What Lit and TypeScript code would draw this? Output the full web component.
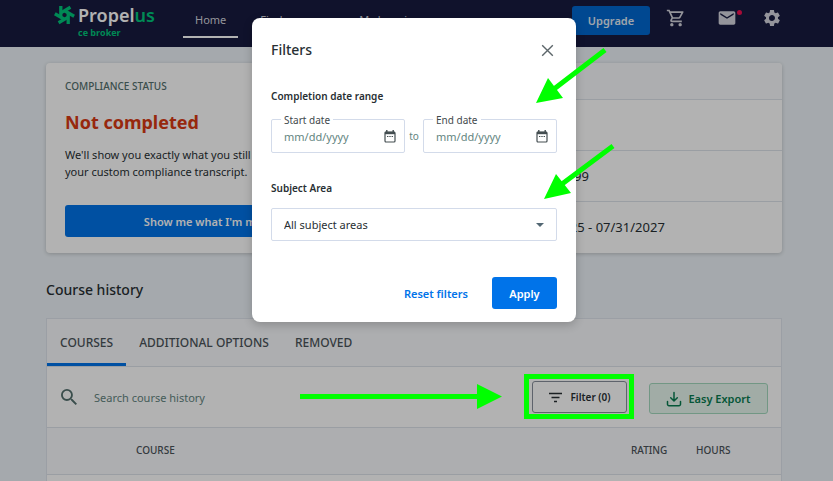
import { LitElement, html, css, svg } from "lit";
import { customElement, state } from "lit/decorators.js";

@customElement("app-root")
export class AppRoot extends LitElement {
  static styles = css`
    :host {
      display: block;
      position: relative;
      height: 100vh;
      overflow: hidden;
      background: #edf3f8;
      color: #282f33;
      font: 11px/17px "Noto Sans", sans-serif;
    }
    * { box-sizing: border-box; }
    a { color: inherit; text-decoration: none; }
    button, input, select { font: inherit; color: inherit; margin: 0; }
    h1, h2, h3, p, dl, dd { margin: 0; }
    svg { display: block; flex: none; }
    button { cursor: pointer; }

    header {
      display: flex;
      align-items: flex-start;
      height: 47px;
      padding: 0 51px 0 54px;
      background: #181a40;
      color: #d4d5de;
    }
    .brand { display: flex; gap: 3px; width: 129px; padding-top: 5px; color: #00c47a; }
    .brand-name { font-size: 18px; line-height: 20px; font-weight: 600; }
    .brand-name .light { color: #fff; }
    .brand-sub { font: 700 9px/12px "Open Sans", sans-serif; margin-top: 2px; }
    nav { display: flex; gap: 10px; flex: 1; }
    nav a { height: 38px; padding: 11px 12px 0; white-space: nowrap; }
    nav a.current { border-bottom: 2px solid #fff; }
    .tools { display: flex; align-items: flex-start; padding-top: 6px; }
    .tool { display: block; position: relative; padding: 2px 0 0; border: 0; background: none; }
    .cart { margin: 0 31px 0 16px; }
    .mail { margin-right: 25px; }
    .dot { position: absolute; right: -5px; top: 4px; width: 5px; height: 5px; border-radius: 50%; background: #f0104f; }
    .primary { border: 0; border-radius: 3px; background: #0073e9; color: #fff; font-weight: 600; }
    .upgrade { height: 29px; width: 78px; background: #0067d0; color: #e4edf6; }

    main { padding: 16px 51px 0 46px; }
    .summary {
      display: grid;
      grid-template-columns: 46fr 54fr;
      border-radius: 4px;
      background: #fff;
      box-shadow: 0 1px 4px #0003;
    }
    .status { padding: 14px 19px 16px; }
    .eyebrow { font-size: 10px; font-weight: 500; line-height: 18px; color: #54706e; }
    .status h2 { margin: 14px 0 11px; color: #d93a13; font-size: 18px; line-height: 26px; font-weight: 700; }
    .status .primary { width: 100%; height: 32px; margin-top: 25px; }
    .facts { border-radius: 4px; overflow: hidden; }
    .fact { display: flex; align-items: center; height: 51px; padding-left: 131px; font-size: 13px; border-bottom: 1px solid #dde3ea; }
    .fact:first-child { height: 37px; background: #f8f9fc; }
    .fact:last-child { border: 0; }

    h1 { margin: 27px 0 18px; font-size: 14px; line-height: 20px; font-weight: 500; }
    .history { border: 1px solid #dfe4ec; background: #fff; }
    .tabs { display: flex; height: 48px; background: #f8f9fc; border-bottom: 1px solid #dde3ea; }
    .tabs button { padding: 0 13px; border: 0; border-bottom: 3px solid transparent; border-top: 3px solid transparent; background: none; color: #4b5459; font-weight: 500; font-size: 12px; }
    .tabs button.on { border-bottom-color: #0073e9; }
    .toolbar { display: flex; align-items: center; height: 61px; padding: 0 13px 0 14px; border-bottom: 1px solid #dde3ea; }
    .search { display: flex; align-items: center; gap: 15px; flex: 1; color: #54706e; }
    .search input { flex: 1; min-width: 0; border: 0; outline: 0; background: none; }
    ::placeholder { color: #648581; opacity: 1; }
    .filter { display: flex; align-items: center; justify-content: center; gap: 7px; width: 95px; height: 32px; margin-right: 22px; padding: 0; border: 1px solid #878e9b; border-radius: 3px; background: none; font-size: 10px; font-weight: 600; }
    .export { display: flex; align-items: center; justify-content: center; gap: 6px; width: 119px; height: 31px; margin-top: 3px; padding: 0; border: 1px solid #a4d9be; border-radius: 3px; background: #e7f7ee; color: #087c50; font-weight: 600; }
    table { width: 100%; border-collapse: collapse; table-layout: fixed; }
    th { height: 46px; padding: 0; text-align: left; font-size: 10px; font-weight: 500; color: #4b5459; background: #f8f9fc; border-bottom: 1px solid #dde3ea; }
    .c-gap { width: 89px; }
    .c-rating { width: 65px; }
    .c-hours { width: 85px; }
    td { height: 46px; }

    .scrim { position: absolute; inset: 0; background: #0000004d; }
    .layer { position: absolute; inset: 0; display: flex; align-items: flex-start; justify-content: center; padding: 18px 5px 0 0; }
    .dialog { width: 324px; padding: 18px 19px 13px; border-radius: 8px; background: #fff; box-shadow: 0 3px 10px #0003; }
    .dialog-head { display: flex; justify-content: space-between; align-items: center; height: 28px; }
    .dialog-head h2 { font-size: 14px; line-height: 20px; font-weight: 500; }
    .close { padding: 0 3px; border: 0; background: none; color: #5c666a; }
    .dialog h3, .dialog .label { display: block; font-size: 10px; line-height: 16px; font-weight: 600; }
    .dialog h3 { margin-top: 24px; }
    .dates { display: grid; grid-template-columns: 1fr 18px 1fr; align-items: center; margin: 15px 0 27px; color: #648581; font-size: 10px; text-align: center; }
    .date { position: relative; display: flex; align-items: center; height: 34px; padding: 0 8px 0 12px; border: 1px solid #d3dbea; border-radius: 2px; color: #444e51; }
    .date label { position: absolute; top: -8px; left: 9px; padding: 0 3px; line-height: 16px; background: #fff; color: #3f494c; }
    .date input { flex: 1; min-width: 0; width: 0; padding: 0; border: 0; outline: 0; background: none; font-size: 11px; }
    .picker { position: relative; display: flex; align-items: center; margin: 12px 0 36px; }
    .picker select { flex: 1; height: 33px; padding: 0 12px; border: 1px solid #d3dbea; border-radius: 2px; appearance: none; background: #fff; }
    .picker svg { position: absolute; right: 13px; pointer-events: none; color: #536773; }
    .actions { display: flex; justify-content: flex-end; gap: 24px; }
    .reset { padding: 0; border: 0; background: none; color: #0073e9; font-weight: 600; }
    .apply { width: 65px; height: 32px; }

    .marks { position: absolute; left: 0; top: 0; pointer-events: none; }
  `;

  @state() private tab = "COURSES";

  private logo() {
    return html`<svg width="21" height="20" viewBox="-10.500 -10 21 20" fill="none" stroke="currentColor" stroke-width="3.300" aria-hidden="true">
      ${[0, 60, 120, 180, 240, 300].map((a) => svg`<path transform="rotate(${a})" d="M-3.700 -9V1.600"/>`)}
    </svg>`;
  }

  private calendar() {
    return html`<svg width="12" height="13" viewBox="0 0 12 13" fill="none" stroke="currentColor" aria-hidden="true">
      <rect x="1" y="2" width="10" height="10" rx="1" stroke-width="1.200"/>
      <path d="M1 3h10" stroke-width="2.400"/><path d="M2.800 0v2M9.200 0v2" stroke-width="1.400"/>
      <path d="M3 6.500h1.400M5.300 6.500h1.400M7.600 6.500H9" stroke-width="1.200"/>
    </svg>`;
  }

  render() {
    return html`
      <header>
        <a class="brand" href="#">
          ${this.logo()}
          <div>
            <div class="brand-name"><span class="light">Propel</span>us</div>
            <div class="brand-sub">ce broker</div>
          </div>
        </a>
        <nav>
          <a class="current" href="#">Home</a>
          <a href="#">Find courses</a>
          <a href="#">My learning</a>
        </nav>
        <div class="tools">
          <button class="primary upgrade">Upgrade</button>
          <button class="tool cart" aria-label="Cart">
            <svg width="20" height="20" viewBox="0 0 24 24" fill="currentColor"><path d="M15.550 13c.75 0 1.410-.41 1.750-1.030l3.580-6.490A.996.996 0 0 0 20.010 4H5.210l-.94-2H1v2h2l3.600 7.590-1.350 2.440C4.520 15.370 5.480 17 7 17h12v-2H7l1.100-2h7.450zM6.160 6h12.150l-2.760 5H8.530L6.160 6zM7 18c-1.100 0-1.990.9-1.990 2S5.900 22 7 22s2-.9 2-2-.9-2-2-2zm10 0c-1.100 0-1.990.9-1.990 2s.89 2 1.990 2 2-.9 2-2-.9-2-2-2z"/></svg>
          </button>
          <button class="tool mail" aria-label="Messages">
            <svg width="20" height="20" viewBox="0 0 24 24" fill="currentColor"><path d="M20 4H4c-1.100 0-2 .9-2 2v12c0 1.100.9 2 2 2h16c1.100 0 2-.9 2-2V6c0-1.100-.9-2-2-2zm0 4-8 5-8-5V6l8 5 8-5v2z"/></svg>
            <span class="dot"></span>
          </button>
          <button class="tool" aria-label="Settings">
            <svg width="20" height="20" viewBox="0 0 24 24" fill="currentColor"><path d="M19.140 12.940c.04-.3.06-.61.06-.94 0-.32-.02-.64-.07-.94l2.030-1.580a.49.49 0 0 0 .12-.61l-1.920-3.320a.488.488 0 0 0-.59-.22l-2.390.96c-.5-.38-1.030-.7-1.620-.94l-.36-2.540a.484.484 0 0 0-.48-.41h-3.840c-.24 0-.43.17-.47.41l-.36 2.540c-.59.24-1.130.57-1.620.94l-2.390-.96c-.22-.08-.47 0-.59.22L2.740 8.870c-.12.21-.08.47.12.61l2.030 1.580c-.05.3-.09.63-.09.94s.02.64.07.94l-2.030 1.580a.49.49 0 0 0-.12.61l1.920 3.320c.12.22.37.29.59.22l2.390-.96c.5.38 1.030.7 1.620.94l.36 2.540c.05.24.24.41.48.41h3.840c.24 0 .44-.17.47-.41l.36-2.540c.59-.24 1.130-.56 1.620-.94l2.390.96c.22.08.47 0 .59-.22l1.920-3.320c.12-.22.07-.47-.12-.61l-2.010-1.580zM12 15.600A3.610 3.610 0 0 1 8.400 12c0-1.980 1.620-3.600 3.600-3.600s3.600 1.620 3.600 3.600-1.620 3.600-3.600 3.600z"/></svg>
          </button>
        </div>
      </header>

      <main>
        <section class="summary">
          <div class="status">
            <div class="eyebrow">COMPLIANCE STATUS</div>
            <h2>Not completed</h2>
            <p>We'll show you exactly what you still need to earn with your custom compliance transcript.</p>
            <button class="primary">Show me what I'm missing</button>
          </div>
          <dl class="facts">
            <div class="fact"></div>
            <div class="fact"></div>
            <div class="fact"><dd>RN 9999999</dd></div>
            <div class="fact"><dd>08/01/2025 - 07/31/2027</dd></div>
          </dl>
        </section>

        <h1>Course history</h1>
        <section class="history">
          <div class="tabs" role="tablist">
            ${["COURSES", "ADDITIONAL OPTIONS", "REMOVED"].map((t) => html`
              <button role="tab" class=${t === this.tab ? "on" : ""} aria-selected=${t === this.tab}
                @click=${() => (this.tab = t)}>${t}</button>`)}
          </div>
          <div class="toolbar">
            <label class="search">
              <svg width="16" height="16" viewBox="3 3 17.500 17.500" fill="currentColor" aria-hidden="true"><path d="M15.500 14h-.79l-.28-.27A6.471 6.471 0 0 0 16 9.500 6.500 6.500 0 1 0 9.500 16c1.610 0 3.090-.59 4.230-1.570l.27.28v.79l5 4.990L20.490 19l-4.990-5zm-6 0C7.010 14 5 11.990 5 9.500S7.010 5 9.500 5 14 7.010 14 9.500 11.990 14 9.500 14z"/></svg>
              <input type="search" placeholder="Search course history" aria-label="Search course history">
            </label>
            <button class="filter">
              <svg width="15" height="11" viewBox="0 0 15 11" fill="none" stroke="currentColor" stroke-width="1.400" aria-hidden="true"><path d="M1 1.500h13M3.500 5.500h8M6 9.500h3"/></svg>
              Filter (0)
            </button>
            <button class="export">
              <svg width="16" height="16" viewBox="0 0 16 16" fill="none" stroke="currentColor" stroke-width="1.500" stroke-linecap="round" stroke-linejoin="round" aria-hidden="true"><path d="M8 1.500v8M4.700 6.700 8 10l3.300-3.300M1.500 10.500v2.700a1.500 1.500 0 0 0 1.500 1.500h10a1.500 1.500 0 0 0 1.500-1.500v-2.700"/></svg>
              Easy Export
            </button>
          </div>
          <table>
            <thead><tr>
              <th class="c-gap"></th><th>COURSE</th><th class="c-rating">RATING</th><th class="c-hours">HOURS</th>
            </tr></thead>
            <tbody><tr><td></td><td></td><td></td><td></td></tr></tbody>
          </table>
        </section>
      </main>

      <div class="scrim"></div>
      <div class="layer">
        <form class="dialog" role="dialog" aria-label="Filters" @submit=${(e: Event) => e.preventDefault()}>
          <div class="dialog-head">
            <h2>Filters</h2>
            <button type="button" class="close" aria-label="Close">
              <svg width="13" height="13" viewBox="0 0 13 13" fill="none" stroke="currentColor" stroke-width="1.400"><path d="M1.200 1.200l10.600 10.600M11.800 1.200l-10.600 10.600"/></svg>
            </button>
          </div>
          <h3>Completion date range</h3>
          <div class="dates">
            <div class="date"><label for="start">Start date</label><input id="start" placeholder="mm/dd/yyyy">${this.calendar()}</div>
            <span>to</span>
            <div class="date"><label for="end">End date</label><input id="end" placeholder="mm/dd/yyyy">${this.calendar()}</div>
          </div>
          <label class="label" for="subject">Subject Area</label>
          <div class="picker">
            <select id="subject"><option>All subject areas</option></select>
            <svg width="8" height="4" viewBox="0 0 8 4" fill="currentColor" aria-hidden="true"><path d="M0 0h8L4 4z"/></svg>
          </div>
          <div class="actions">
            <button type="reset" class="reset">Reset filters</button>
            <button class="primary apply">Apply</button>
          </div>
        </form>
      </div>

      <svg class="marks" width="833" height="481" viewBox="0 0 833 481" fill="none" stroke="#0f0" stroke-width="5" aria-hidden="true">
        <path d="M605 50 554 89M613 146 562 184M300 396.500H480"/>
        <path d="M536 103 548 78 563 98ZM544 199 556 174 571 193ZM477 384 502 396.500 477 409Z" fill="#0f0" stroke="none"/>
        <rect x="526.500" y="376.500" width="105" height="40"/>
      </svg>
    `;
  }
}
